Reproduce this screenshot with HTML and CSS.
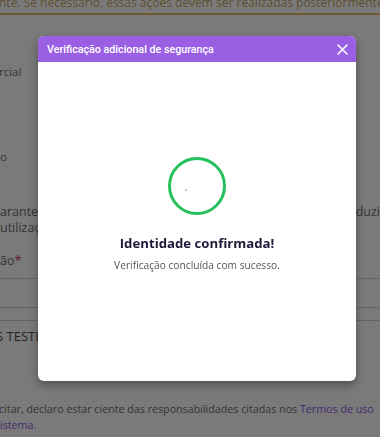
FILE: index.html
```html
<!DOCTYPE html>
<html lang="pt-BR">
<head>
<meta charset="utf-8">
<title>Verificação adicional de segurança</title>
<link rel="stylesheet" href="styles.css">
</head>
<body>
<div class="page">
  <div class="notice">nte. Se necessário, essas ações devem ser realizadas posteriormente.</div>
  <div class="form">
    <div class="label l1">rcial</div>
    <div class="label l2">o</div>
    <div class="para">
      <div class="pline"><span>arante a</span><span>duzi</span></div>
      <div class="pline">utilização</div>
    </div>
    <div class="label l3">ão<span class="req">*</span></div>
    <div class="rule r1"></div>
    <div class="rule r2"></div>
    <div class="rule r3"></div>
    <div class="value">S TESTE</div>
    <div class="terms t1">citar, declaro estar ciente das responsabilidades citadas nos <span class="link">Termos de uso</span></div>
    <div class="terms"><span class="link">istema.</span></div>
  </div>
</div>
<div class="overlay">
  <div class="modal">
    <div class="modal-head">
      <span class="modal-title">Verificação adicional de segurança</span>
      <svg class="close" width="11" height="11" viewBox="0 0 11 11"><path d="M1 1L10 10M10 1L1 10" stroke="#fff" stroke-width="1.6" stroke-linecap="round"/></svg>
    </div>
    <div class="modal-body">
      <div class="ring"><span class="dot"></span></div>
      <div class="ok-title">Identidade confirmada!</div>
      <div class="ok-sub">Verificação concluída com sucesso.</div>
    </div>
  </div>
</div>
</body>
</html>
```
FILE: styles.css
```css
html, body {
  margin: 0;
  padding: 0;
}
body {
  width: 380px;
  height: 437px;
  overflow: hidden;
  background: #f5f5f5;
  font-family: "Open Sans", "Liberation Sans", sans-serif;
}
.page {
  width: 380px;
  height: 437px;
  overflow: hidden;
}
.notice {
  height: 21px;
  margin-top: -6px;
  box-sizing: border-box;
  border-bottom: 2px solid #e0b262;
  color: #c0a060;
  font-size: 12px;
  line-height: 17px;
  white-space: nowrap;
  margin-left: -1px;
}
.form {
  font-size: 11.5px;
  color: #6a6a6a;
  white-space: nowrap;
}
.label {
  line-height: 16px;
}
.l1 { margin-top: 49px; margin-left: -1px; }
.l2 { margin-top: 69px; }
.para { margin-top: 39px; line-height: 16px; font-size: 12.5px; }
.pline { display: flex; justify-content: space-between; }
.l3 { margin-top: 17px; font-size: 12.5px; }
.req { color: #c0304a; }
.rule { height: 1px; background: #c8c8c8; }
.r1 { margin-top: 9px; }
.r2 { margin-top: 28px; }
.r3 { margin-top: 12px; }
.value {
  margin-top: 7px;
  font-size: 13px;
  line-height: 16px;
  color: #4a4a4a;
  margin-left: -4px;
}
.terms {
  font-size: 10.7px;
  line-height: 16px;
}
.t1 { margin-top: 57px; margin-left: -1px; }
.link { color: #8a55d8; }

.overlay {
  position: fixed;
  inset: 0;
  background: rgba(0, 0, 0, 0.5);
}
.modal {
  position: absolute;
  left: 38px;
  top: 36px;
  width: 318px;
  height: 345px;
  background: #fff;
  border-radius: 6px;
  box-shadow: 0 4px 10px rgba(0, 0, 0, 0.35);
  display: flex;
  flex-direction: column;
  overflow: hidden;
}
.modal-head {
  height: 26px;
  background: #9a5fe3;
  display: flex;
  align-items: center;
  justify-content: space-between;
  padding: 0 8px 0 9px;
  flex: none;
}
.modal-title {
  color: #fff;
  font-family: Roboto, "Liberation Sans", sans-serif;
  font-weight: 500;
  font-size: 10.7px;
}
.close { display: block; }
.modal-body {
  display: flex;
  flex-direction: column;
  align-items: center;
  padding-top: 95px;
}
.ring {
  width: 52px;
  height: 52px;
  border: 3px solid #27c15b;
  border-radius: 50%;
  position: relative;
}
.dot {
  position: absolute;
  left: 14px;
  top: 29px;
  width: 2px;
  height: 2px;
  background: #aaa;
  border-radius: 50%;
}
.ok-title {
  margin-top: 19px;
  font-size: 13.2px;
  font-weight: 700;
  color: #1d1b3a;
  line-height: 18px;
}
.ok-sub {
  margin-top: 6px;
  font-size: 10.2px;
  color: #555;
  line-height: 14px;
}
```
